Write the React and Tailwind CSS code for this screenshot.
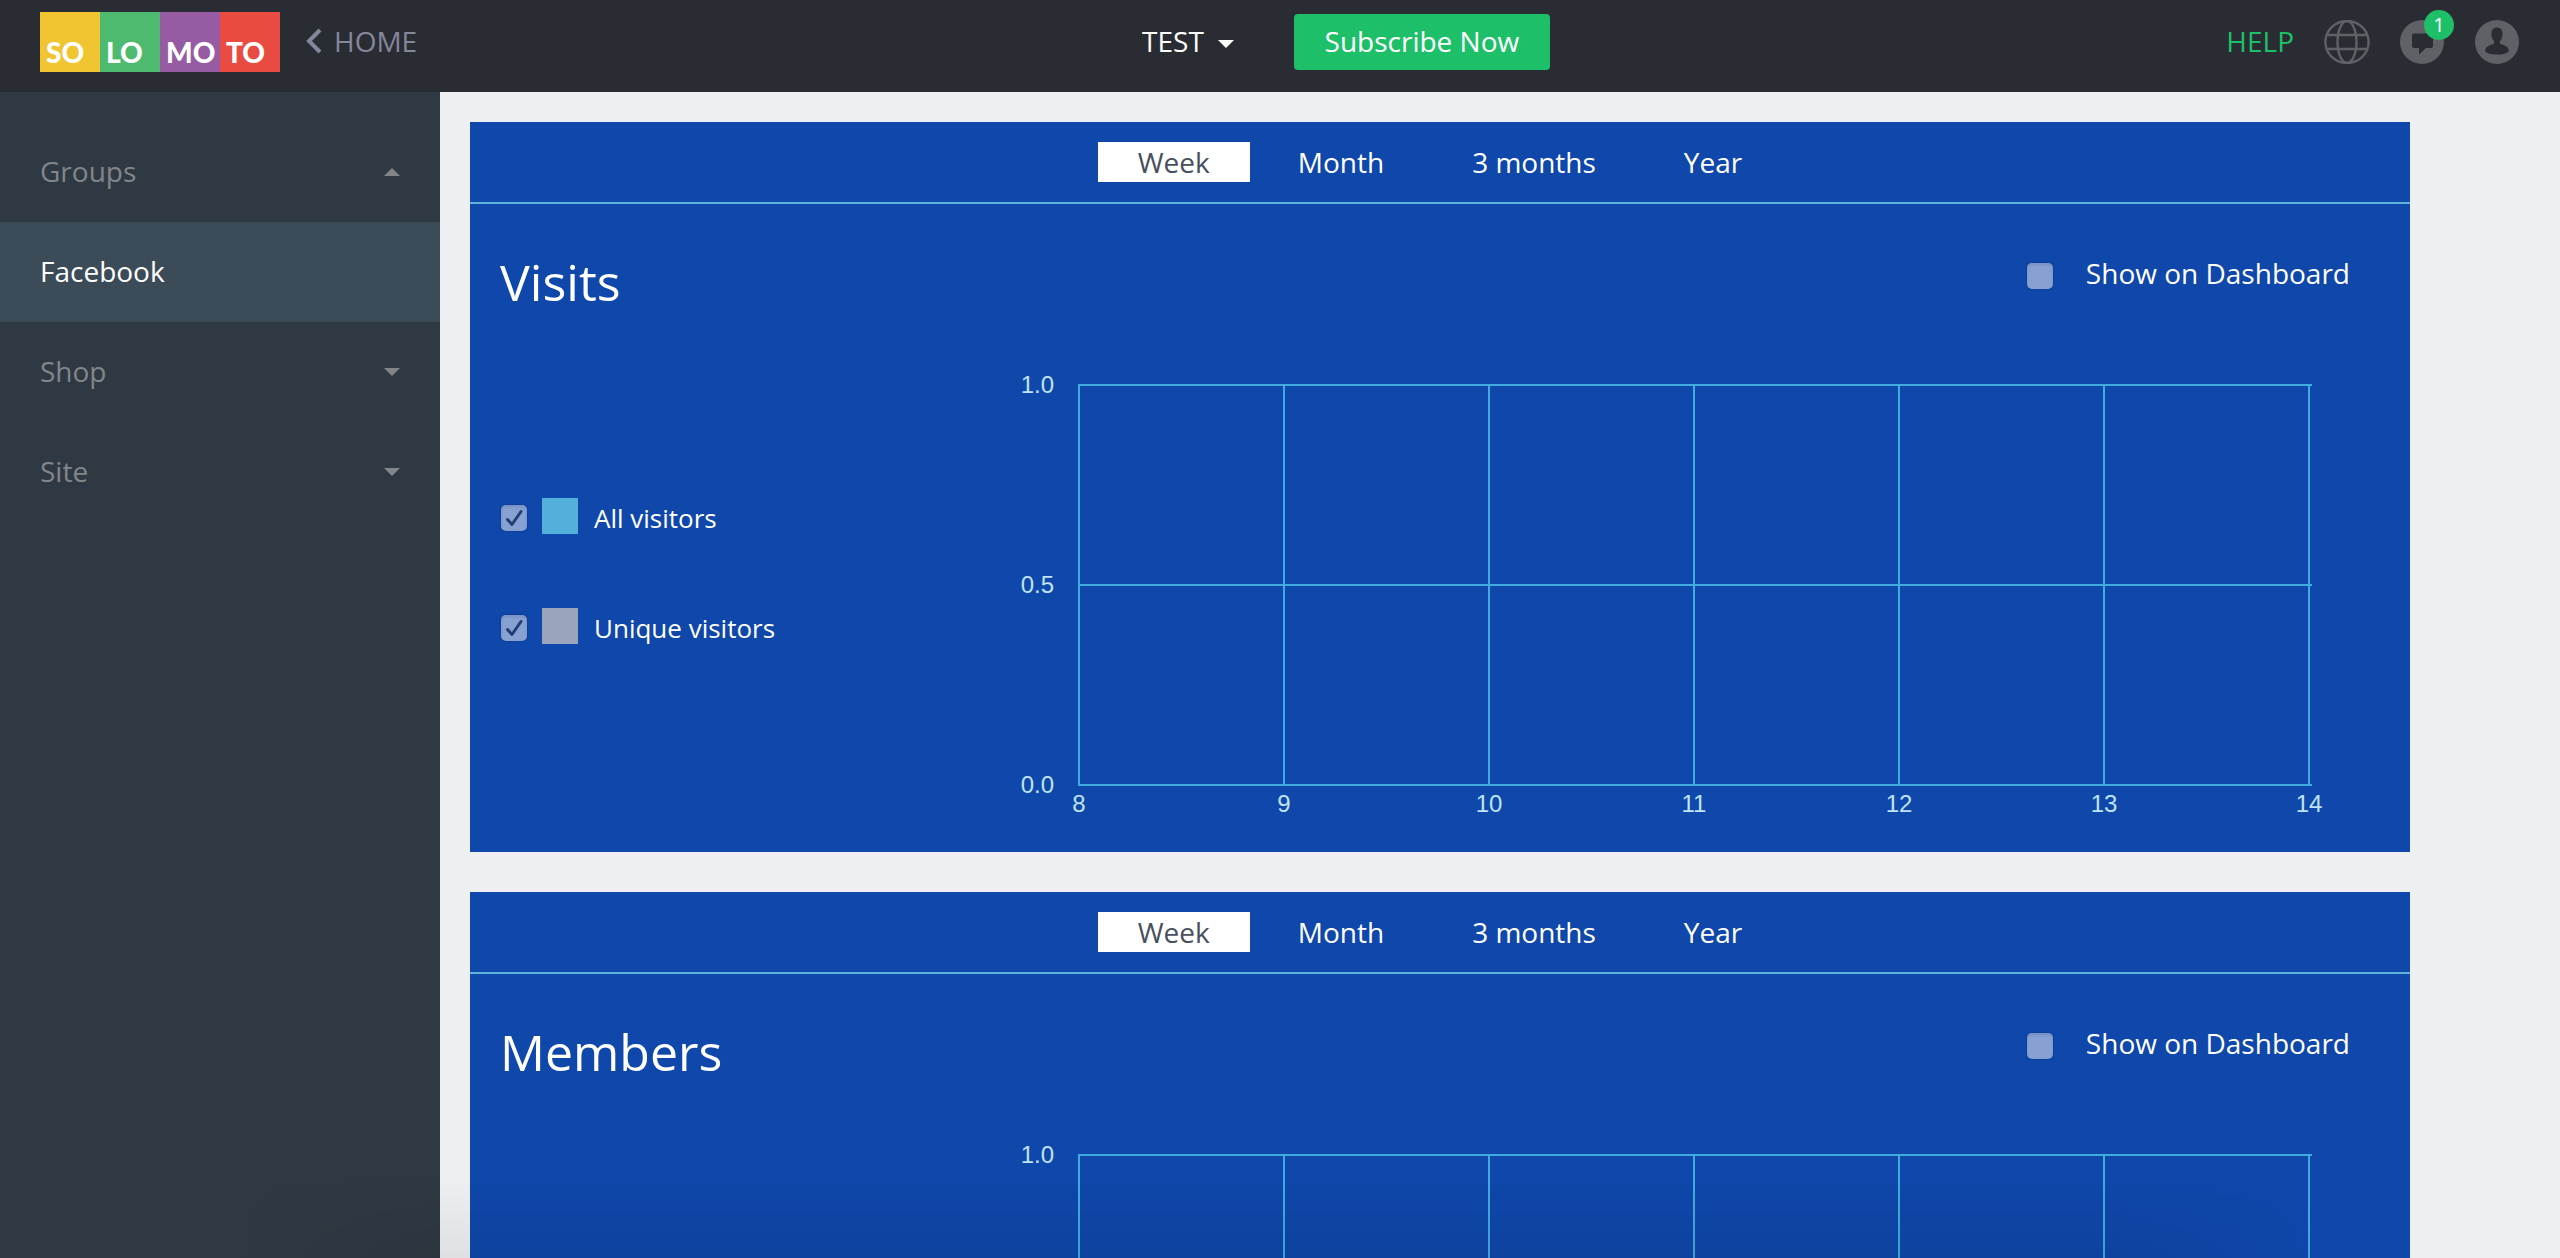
import React from "react";

const NAV = [
  { label: "Groups", arrow: "up" },
  { label: "Facebook", active: true },
  { label: "Shop", arrow: "down" },
  { label: "Site", arrow: "down" },
];

const RANGES = ["Week", "Month", "3 months", "Year"];

const LOGO = [
  { text: "SO", color: "bg-[#f1c431]" },
  { text: "LO", color: "bg-[#4dba70]" },
  { text: "MO", color: "bg-[#965ba3]" },
  { text: "TO", color: "bg-[#e94b42]" },
];

function Caret({ up = false }) {
  return (
    <svg className="h-2 w-4" viewBox="0 0 16 8" fill="currentColor" aria-hidden="true">
      <path d={up ? "M0 8 8 0l8 8z" : "M0 0h16L8 8z"} />
    </svg>
  );
}

function GlobeIcon() {
  return (
    <svg className="h-11 w-[46px]" viewBox="0 0 46 44" fill="none" stroke="#606166" strokeWidth="2.4" aria-hidden="true">
      <ellipse cx="23" cy="22" rx="21.6" ry="21" />
      <ellipse cx="23" cy="22" rx="9.5" ry="21" />
      <path d="M3.500 15h39M3.500 29h39" />
    </svg>
  );
}

function ChatIcon() {
  return (
    <svg className="size-11" viewBox="0 0 44 44" aria-hidden="true">
      <circle cx="22" cy="22" r="22" fill="#606166" />
      <path d="M14 13.500h17a2 2 0 0 1 2 2V26a2 2 0 0 1-2 2h-5l-7 6.500V28h-5a2 2 0 0 1-2-2V15.500a2 2 0 0 1 2-2z" fill="#2a2c33" />
    </svg>
  );
}

function UserIcon() {
  return (
    <svg className="h-11 w-[46px]" viewBox="0 0 46 44" aria-hidden="true">
      <circle cx="23" cy="22" r="22" fill="#606166" />
      <path
        d="M23 7.500c3.600 0 5.600 2.600 5.600 6.300 0 3-1 5.700-2.600 7.200v2.500c1.500 1.200 8.800 2.300 8.800 7 0 2.500-5 4-11.800 4s-11.800-1.500-11.800-4c0-4.700 7.300-5.800 8.800-7V21c-1.600-1.500-2.600-4.200-2.600-7.200 0-3.700 2-6.300 5.600-6.300z"
        fill="#2a2c33"
      />
    </svg>
  );
}

function Header() {
  return (
    <header className="grid h-[92px] shrink-0 grid-cols-[1fr_auto_1fr] bg-[#2a2c33] px-10 pt-3">
      <div className="flex items-start">
        <a href="#" aria-label="Solomoto" className="flex">
          {LOGO.map((part) => (
            <span
              key={part.text}
              className={`flex size-[60px] items-end pb-1 pl-1.5 font-['Lato',sans-serif] text-[28px] leading-8 font-black text-white ${part.color}`}
            >
              {part.text}
            </span>
          ))}
        </a>
        <a href="#" className="ml-6 flex h-[60px] items-center gap-3 pb-0.5 text-[#84869a]">
          <svg className="h-7 w-[18px]" viewBox="0 0 18 28" fill="none" stroke="currentColor" strokeWidth="4" aria-hidden="true">
            <path d="M16 3 5 14l11 11" />
          </svg>
          HOME
        </a>
      </div>
      <div className="flex items-start pl-[132px]">
        <button type="button" className="flex h-[60px] items-center gap-3.5 pb-0.5 text-white">
          TEST
          <span className="pt-1.5"><Caret /></span>
        </button>
        <button type="button" className="mt-0.5 ml-[60px] h-14 w-64 rounded bg-[#1ebf69] pb-0.5 text-white">
          Subscribe Now
        </button>
      </div>
      <div className="flex h-[60px] items-center justify-end gap-[30px]">
        <a href="#" className="pb-0.5 text-[#1ebf69]">HELP</a>
        <button type="button" aria-label="Language"><GlobeIcon /></button>
        <button type="button" aria-label="Messages" className="relative">
          <ChatIcon />
          <span className="absolute -top-2.5 -right-2.5 flex size-[30px] items-center justify-center rounded-full bg-[#1ebf69] text-xl text-white">
            1
          </span>
        </button>
        <button type="button" aria-label="Account"><UserIcon /></button>
      </div>
    </header>
  );
}

function Sidebar() {
  return (
    <nav className="w-[440px] shrink-0 bg-[#2f3943] pt-[30px]">
      {NAV.map((item) => (
        <a
          key={item.label}
          href="#"
          className={`flex h-[100px] items-center justify-between px-10 ${
            item.active ? "bg-[#3c4b58] text-white" : "text-[#828689]"
          }`}
        >
          <span className="pb-0.5">{item.label}</span>
          {item.arrow && <Caret up={item.arrow === "up"} />}
        </a>
      ))}
    </nav>
  );
}

function CheckBox({ id, defaultChecked }) {
  return (
    <span className="mt-1 grid size-7 place-items-center">
      <input
        id={id}
        type="checkbox"
        defaultChecked={defaultChecked}
        className="peer col-start-1 row-start-1 size-[26px] appearance-none rounded-[5px] bg-[#87a1d3] shadow-[0_0_2px_#0a2f78,inset_0_2px_3px_#7890c4]"
      />
      <svg
        className="pointer-events-none invisible col-start-1 row-start-1 size-[26px] peer-checked:visible"
        viewBox="0 0 26 26"
        fill="none"
        stroke="#223f75"
        strokeWidth="3"
        strokeLinecap="round"
        strokeLinejoin="round"
        aria-hidden="true"
      >
        <path d="M6.500 14.500 11 19.500 20 6.500" />
      </svg>
    </span>
  );
}

function LegendItem({ id, color, label }) {
  return (
    <div className="flex h-9 items-center">
      <CheckBox id={id} defaultChecked />
      <span className={`ml-3.5 size-9 ${color}`} />
      <label htmlFor={id} className="mt-1 ml-4 text-[26px] leading-9">{label}</label>
    </div>
  );
}

function Chart({ title }) {
  const days = [8, 9, 10, 11, 12, 13, 14];
  const values = ["1.0", "0.5", "0.0"];
  return (
    <svg
      viewBox="0 0 1340 460"
      className="min-w-0 flex-1 font-['Liberation_Sans',sans-serif]"
      role="img"
      aria-label={`${title} chart`}
    >
      <g stroke="#3fabde" strokeWidth="2">
        {values.map((v, i) => (
          <path key={v} d={`M78 ${21 + i * 200}H1312`} />
        ))}
        {days.map((d, i) => (
          <path key={d} d={`M${79 + i * 205} 20V422`} />
        ))}
      </g>
      <g fill="#bfe4f5" fontSize="24">
        {values.map((v, i) => (
          <text key={v} x="54" y={29 + i * 200} textAnchor="end">{v}</text>
        ))}
        {days.map((d, i) => (
          <text key={d} x={79 + i * 205} y="448" textAnchor="middle">{d}</text>
        ))}
      </g>
    </svg>
  );
}

function Panel({ title, series }) {
  const key = title.toLowerCase();
  return (
    <section className="shrink-0 bg-[#0f47aa] pb-7 text-white">
      <div className="flex h-[82px] items-center justify-center gap-2 border-b-2 border-[#60b3dd]">
        {RANGES.map((range, i) => (
          <button
            key={range}
            type="button"
            className={`h-10 px-10 pb-0.5 ${i === 0 ? "bg-white text-[#48505e]" : ""}`}
          >
            {range}
          </button>
        ))}
      </div>
      <div className="flex items-start justify-between pt-10 pr-[60px] pl-[30px]">
        <h2 className="text-[50px] leading-[76px]">{title}</h2>
        <div className="flex h-[60px] items-center gap-8">
          <CheckBox id={`${key}-dash`} />
          <label htmlFor={`${key}-dash`} className="pb-0.5">Show on Dashboard</label>
        </div>
      </div>
      <div className="flex items-start pt-11 pr-[70px] pl-[30px]">
        <div className="flex w-[500px] flex-col gap-[74px] pt-[134px]">
          {series.map((s) => (
            <LegendItem key={s.label} id={`${key}-${s.id}`} color={s.color} label={s.label} />
          ))}
        </div>
        <Chart title={title} />
      </div>
    </section>
  );
}

export default function App() {
  return (
    <div className="relative flex h-screen flex-col overflow-hidden font-['Open_Sans',sans-serif] text-[28px] leading-10">
      <Header />
      <div className="flex min-h-0 flex-1">
        <Sidebar />
        <main className="flex flex-1 flex-col gap-10 overflow-hidden bg-[#eeeff3] pt-[30px] pr-[150px] pl-[30px]">
          <Panel
            title="Visits"
            series={[
              { id: "all", label: "All visitors", color: "bg-[#52b0da]" },
              { id: "unique", label: "Unique visitors", color: "bg-[#9aa5bd]" },
            ]}
          />
          <Panel
            title="Members"
            series={[
              { id: "all", label: "All members", color: "bg-[#52b0da]" },
              { id: "new", label: "New members", color: "bg-[#9aa5bd]" },
            ]}
          />
        </main>
      </div>
      <div className="pointer-events-none absolute inset-x-60 bottom-0 h-20 bg-linear-to-t from-black/6 to-transparent mask-x-from-90%" />
    </div>
  );
}
